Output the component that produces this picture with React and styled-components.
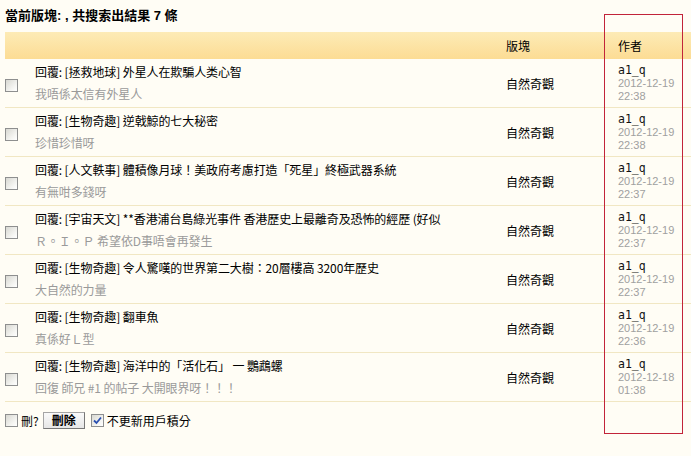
import React from "react";
import styled, { createGlobalStyle } from "styled-components";

const results = [
  { forum: "拯救地球", title: "外星人在欺騙人类心智", note: "我唔係太信有外星人", date: "2012-12-19", time: "22:38" },
  { forum: "生物奇趣", title: "逆戟鯨的七大秘密", note: "珍惜珍惜呀", date: "2012-12-19", time: "22:38" },
  { forum: "人文軼事", title: "體積像月球！美政府考慮打造「死星」終極武器系統", note: "有無咁多錢呀", date: "2012-12-19", time: "22:37" },
  { forum: "宇宙天文", title: "**香港浦台島綠光事件 香港歷史上最離奇及恐怖的經歷 (好似", note: "Ｒ。Ｉ。Ｐ 希望依D事唔會再發生", date: "2012-12-19", time: "22:37" },
  { forum: "生物奇趣", title: "令人驚嘆的世界第二大樹：20層樓高 3200年歷史", note: "大自然的力量", date: "2012-12-19", time: "22:37" },
  { forum: "生物奇趣", title: "翻車魚", note: "真係好Ｌ型", date: "2012-12-19", time: "22:36" },
  { forum: "生物奇趣", title: "海洋中的「活化石」 一 鸚鵡螺", note: "回復 師兄 #1 的帖子 大開眼界呀！！！", date: "2012-12-18", time: "01:38" },
];

const GlobalStyle = createGlobalStyle`
  html, body {
    margin: 0;
    padding: 0;
    background: #fffdf5;
  }
  body {
    font-family: "Liberation Sans", "Noto Sans CJK TC", sans-serif;
    font-size: 12px;
    color: #000;
    overflow: hidden;
  }
`;

const Page = styled.div`
  position: relative;
  width: 691px;
  height: 456px;
  padding: 0 0 0 5px;
  box-sizing: border-box;
  overflow: hidden;
`;

const Title = styled.h3`
  margin: 0;
  height: 32px;
  line-height: 32px;
  font-size: 13px;
  font-weight: bold;
  font-family: "Liberation Sans", "Noto Sans CJK TC", sans-serif;
`;

const Table = styled.div`
  width: 700px;
`;

const Row = styled.div`
  display: grid;
  grid-template-columns: 30px 465px 112px 1fr;
  align-items: center;
  height: ${(p) => (p.$head ? "27px" : "49px")};
  box-sizing: border-box;
  background: ${(p) =>
    p.$head ? "linear-gradient(#fdebb6, #fcdc94)" : "transparent"};
  border-bottom: ${(p) => (p.$head ? "none" : "1px solid #f1e7c3")};
`;

const Cell = styled.div`
  padding-left: ${(p) => (p.$pad ? "6px" : "0")};
  font-family: "Noto Sans CJK TC", sans-serif;
  font-size: 12px;
`;

const Subject = styled.div`
  line-height: 22px;
  white-space: nowrap;
  overflow: hidden;
  letter-spacing: -0.1px;
  font-family: "Noto Sans CJK TC", sans-serif;
`;

const Note = styled.div`
  color: #9a9a9a;
`;

const Author = styled.div`
  font-family: "DejaVu Sans Mono", monospace;
  font-size: 11.5px;
  line-height: 13px;
  color: #111;
`;

const Stamp = styled.div`
  font-family: "Liberation Sans", sans-serif;
  font-size: 11px;
  line-height: 13px;
  color: #a0a0a0;
`;

const Box = styled.span`
  display: inline-flex;
  align-items: center;
  justify-content: center;
  width: 13px;
  height: 13px;
  box-sizing: border-box;
  border: 1px solid #8e8f8f;
  background: linear-gradient(135deg, #d8d8d2, #f6f6f3 70%, #fff);
  vertical-align: middle;
`;

const Footer = styled.div`
  display: flex;
  align-items: center;
  gap: 3px;
  margin-top: 9px;
  height: 18px;
  font-family: "Noto Sans CJK TC", sans-serif;
`;

const Button = styled.button`
  height: 17px;
  padding: 0 8px;
  margin: 0 3px 0 1px;
  border: 1px solid #a5a5a5;
  border-right-color: #777;
  border-bottom-color: #777;
  background: linear-gradient(#fafafa, #e6e6e6);
  font-family: "Noto Sans CJK TC", sans-serif;
  font-weight: bold;
  font-size: 12px;
  line-height: 14px;
  color: #000;
`;

const Marker = styled.div`
  position: absolute;
  left: 604px;
  top: 14px;
  width: 79px;
  height: 420px;
  box-sizing: border-box;
  border: 1px solid #c2243a;
  pointer-events: none;
`;

const Checkbox = ({ checked }) => (
  <Box>
    {checked && (
      <svg width="9" height="9" viewBox="0 0 9 9">
        <path d="M1 4.5 L3.5 7 L8 1.5" fill="none" stroke="#2a4fb0" strokeWidth="1.8" />
      </svg>
    )}
  </Box>
);

const App = () => {
  return (
    <Page>
      <GlobalStyle />
      <Title>當前版塊: , 共搜索出結果 7 條</Title>
      <Table>
        <Row $head>
          <Cell />
          <Cell />
          <Cell $pad>版塊</Cell>
          <Cell $pad>作者</Cell>
        </Row>
        {results.map((r, i) => (
          <Row key={i}>
            <Cell>
              <Checkbox />
            </Cell>
            <Cell>
              <Subject>
                回覆: [{r.forum}] {r.title}
              </Subject>
              <Subject as={Note}>{r.note}</Subject>
            </Cell>
            <Cell $pad>自然奇觀</Cell>
            <Cell $pad>
              <Author>a1_q</Author>
              <Stamp>{r.date}</Stamp>
              <Stamp>{r.time}</Stamp>
            </Cell>
          </Row>
        ))}
      </Table>
      <Footer>
        <Checkbox />
        <span>刪?</span>
        <Button>刪除</Button>
        <Checkbox checked />
        <span>不更新用戶積分</span>
      </Footer>
      <Marker />
    </Page>
  );
};

export default App;
